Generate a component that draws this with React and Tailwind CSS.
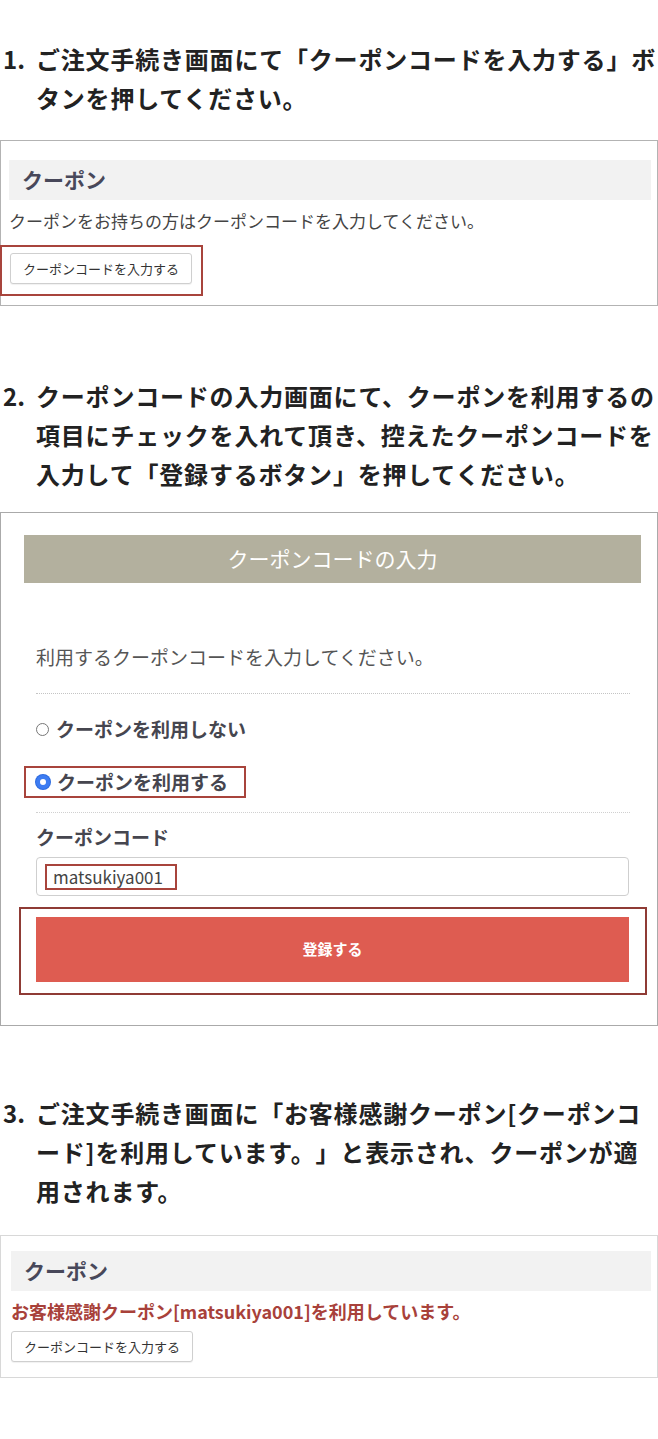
const jp = { fontFamily: '"Noto Sans CJK JP", "Noto Sans", sans-serif' };

function Step({ num, children, className = "" }) {
  return (
    <div className={`flex text-[24px] leading-[39px] font-bold text-[#222] tracking-[0.8px] [text-spacing-trim:space-all] ${className}`}>
      <span className="w-[36px] shrink-0 pl-[3px] tracking-normal">{num}.</span>
      <p className="flex-1">{children}</p>
    </div>
  );
}

function SmallButton() {
  return (
    <button className="w-[182px] h-[31px] border border-[#cfcfcf] rounded-[3px] bg-white text-[13px] text-[#333] shadow-[0_1px_1px_rgba(0,0,0,0.06)]">
      クーポンコードを入力する
    </button>
  );
}

function CouponHeader() {
  return (
    <div className="h-[40px] bg-[#f2f2f2] flex items-center pl-[13px] text-[21px] font-bold text-[#48485a]">
      クーポン
    </div>
  );
}

function Radio({ checked, label }) {
  return (
    <div className="flex items-center gap-[7px] h-[26px]">
      {checked ? (
        <span className="w-[14px] h-[14px] rounded-full border-[4px] border-[#3d7cf2] bg-white ring-1 ring-[#2d6be0]" />
      ) : (
        <span className="w-[13px] h-[13px] rounded-full border border-[#777] bg-white" />
      )}
      <span className="text-[19px] font-bold text-[#46464f]">{label}</span>
    </div>
  );
}

export default function App() {
  return (
    <div className="w-[658px] min-h-[1439px] bg-white pt-[39px]" style={jp}>
      {/* step 1 */}
      <Step num="1">ご注文手続き画面にて「クーポンコードを入力する」ボタンを押してください。</Step>

      <div className="mt-[23px] border border-[#b3b3b3] pt-[19px] pb-[9px]">
        <div className="ml-[8px] mr-[6px]">
          <CouponHeader />
        </div>
        <p className="ml-[8px] mt-[9px] text-[17px] leading-[24px] text-[#444]">
          クーポンをお持ちの方はクーポンコードを入力してください。
        </p>
        <div className="mt-[12px] -ml-px w-[203px] h-[51px] border-2 border-[#a8443c] pl-[8px] pt-[6px]">
          <SmallButton />
        </div>
      </div>

      {/* step 2 */}
      <Step num="2" className="mt-[70px]">
        クーポンコードの入力画面にて、クーポンを利用するの項目にチェックを入れて頂き、控えたクーポンコードを入力して「登録するボタン」を押してください。
      </Step>

      <div className="mt-[19px] border border-[#aaa] pt-[22px] pb-[30px]">
        <div className="ml-[23px] mr-[16px] h-[48px] bg-[#b3b09e] flex items-center justify-center text-[21px] text-white">
          クーポンコードの入力
        </div>
        <p className="ml-[35px] mr-[27px] mt-[61px] text-[19px] leading-[26px] text-[#555]">
          利用するクーポンコードを入力してください。
        </p>
        <div className="ml-[35px] mr-[27px] mt-[23px] border-t border-dotted border-[#c4c4c4]" />
        <div className="ml-[35px] mt-[22px]">
          <Radio label="クーポンを利用しない" />
        </div>
        <div className="ml-[23px] mt-[24px] w-[222px] h-[32px] border-2 border-[#a8443c] pl-[10px] flex items-center">
          <Radio checked label="クーポンを利用する" />
        </div>
        <div className="ml-[35px] mr-[27px] mt-[14px] border-t border-dotted border-[#d0d0d0]" />
        <p className="ml-[35px] mt-[11px] text-[19px] leading-[26px] font-bold text-[#46464f]">
          クーポンコード
        </p>
        <div className="ml-[35px] mr-[28px] mt-[7px] h-[39px] border border-[#cfcfcf] rounded-[4px] flex items-center pl-[8px]">
          <div className="h-[26px] w-[132px] border-2 border-[#a8443c] flex items-center pl-[6px] text-[17px] text-[#444]">
            matsukiya001
          </div>
        </div>
        <div className="ml-[18px] mr-[10px] mt-[11px] border-2 border-[#8f3b35] pt-[8px] pb-[11px] pl-[15px] pr-[16px]">
          <button className="w-full h-[65px] bg-[#de5c51] text-white text-[15px] font-bold">登録する</button>
        </div>
      </div>

      {/* step 3 */}
      <Step num="3" className="mt-[67px]">
        ご注文手続き画面に「お客様感謝クーポン[クーポンコード]を利用しています。」と表示され、クーポンが適用されます。
      </Step>

      <div className="mt-[25px] border border-[#d8d8d8] pt-[15px] pb-[15px]">
        <div className="ml-[10px] mr-[6px]">
          <CouponHeader />
        </div>
        <p className="ml-[10px] mt-[9px] text-[18px] leading-[22px] font-bold text-[#a8413a]">
          お客様感謝クーポン[matsukiya001]を利用しています。
        </p>
        <div className="ml-[10px] mt-[9px]">
          <SmallButton />
        </div>
      </div>
    </div>
  );
}
